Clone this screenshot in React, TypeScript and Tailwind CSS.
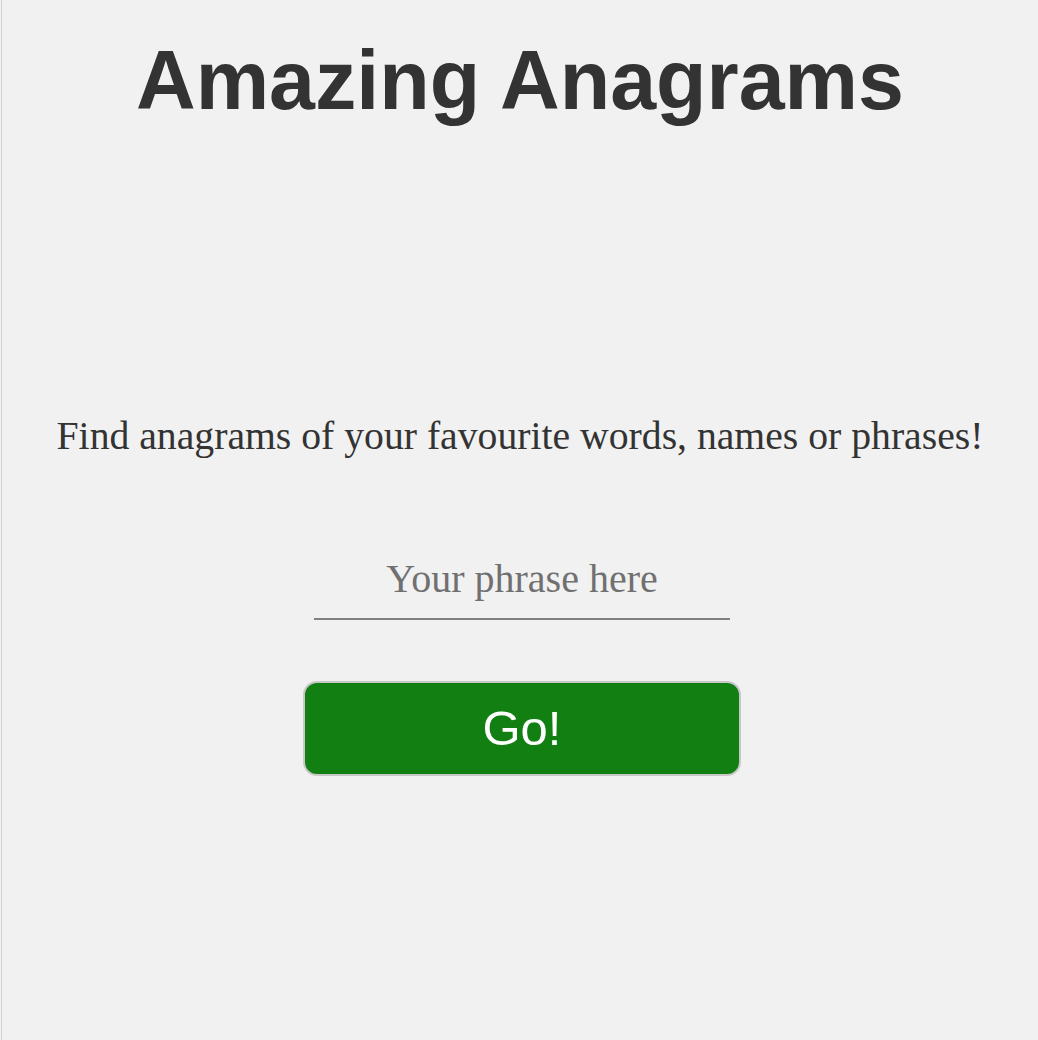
export default function App() {
  return (
    <div className="min-h-screen bg-[#f1f1f1]">
      <div className="ml-px min-h-screen border-l border-[#d2d2d2] flex flex-col items-center">
        <h1 className="mt-[40px] text-[82.6px] leading-none font-bold text-[#333333] [font-family:'Liberation_Sans',Arial,sans-serif]">
          Amazing Anagrams
        </h1>
        <p className="mt-[294px] text-[39.7px] leading-none text-[#333333] [font-family:'Liberation_Serif',Georgia,serif]">
          Find anagrams of your favourite words, names or phrases!
        </p>
        <input
          type="text"
          placeholder="Your phrase here"
          className="mt-[94px] ml-[4px] w-[416px] h-[70px] pb-[11px] bg-transparent border-b-2 border-[#808080] text-center text-[40px] text-[#333333] placeholder:text-[#707070] outline-none [font-family:'Liberation_Serif',Georgia,serif]"
        />
        <button className="mt-[61px] ml-[4px] w-[438px] h-[95px] rounded-[14px] border-2 border-[#c8c8c8] bg-[#117f11] text-white text-[49px] [font-family:'Liberation_Sans',Arial,sans-serif]">
          Go!
        </button>
      </div>
    </div>
  );
}
